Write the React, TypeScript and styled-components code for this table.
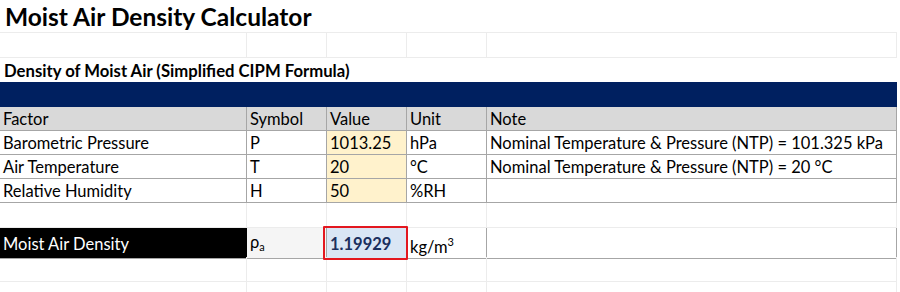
import React from 'react';
import styled, { createGlobalStyle } from 'styled-components';

const GlobalStyle = createGlobalStyle`
    html, body {
        margin: 0;
        padding: 0;
        background: #ffffff;
    }
    body {
        font-family: Lato, 'Open Sans', 'Liberation Sans', sans-serif;
        color: #000000;
    }
`;

const COLS = '247px 80px 80px 80px 410px';

const Sheet = styled.div`
    width: 900px;
    height: 292px;
    overflow: hidden;
    display: flex;
    flex-direction: column;
`;

const Row = styled.div<{ $h: number }>`
    display: grid;
    grid-template-columns: ${COLS};
    height: ${(p) => p.$h}px;
    flex-shrink: 0;
`;

const Cell = styled.div<{ $bg?: string; $line?: 'grid' | 'table' }>`
    display: flex;
    align-items: flex-end;
    padding: 0 3px 1px;
    font-size: 16.5px;
    line-height: 20px;
    white-space: nowrap;
    background: ${(p) => p.$bg ?? 'transparent'};
    border-right: 1px solid ${(p) => (p.$line === 'table' ? '#a6a6a6' : '#ececec')};
    border-bottom: 1px solid ${(p) => (p.$line === 'table' ? '#a6a6a6' : '#ececec')};
    box-sizing: border-box;
`;

const Title = styled.div`
    grid-column: 1 / span 5;
    display: flex;
    align-items: center;
    padding: 0 5px;
    font-size: 24.5px;
    font-weight: 700;
    border-bottom: 1px solid #ececec;
`;

const Subtitle = styled.div`
    grid-column: 1 / span 5;
    display: flex;
    align-items: flex-end;
    padding: 0 4px 1px;
    font-size: 16.7px;
    font-weight: 700;
`;

const NavyBar = styled.div`
    grid-column: 1 / span 5;
    background: #002060;
`;

const LabelCell = styled(Cell)`
    background: #000000;
    color: #ffffff;
    border-right-color: #000000;
    align-items: center;
    padding-top: 3px;
`;

const ResultCell = styled(Cell)`
    background: #dae6f5;
    color: #1b2f5e;
    font-weight: 700;
    align-items: center;
    padding-top: 2px;
    position: relative;
    &::after {
        content: '';
        position: absolute;
        left: -4px;
        top: -2px;
        right: -2px;
        bottom: -2px;
        border: 2px solid #e3171f;
        border-radius: 1px;
    }
`;

const Unit = styled(Cell)`
    align-items: flex-start;
    padding-top: 4px;
`;

const Sub = styled.sub`
    font-size: 11px;
    vertical-align: -3px;
`;

const Sup = styled.sup`
    font-size: 11px;
    vertical-align: 7px;
`;

const inputs = [
    { factor: 'Barometric Pressure', symbol: 'P', value: '1013.25', unit: 'hPa', note: 'Nominal Temperature & Pressure (NTP) = 101.325 kPa' },
    { factor: 'Air Temperature', symbol: 'T', value: '20', unit: '°C', note: 'Nominal Temperature & Pressure (NTP) = 20 °C' },
    { factor: 'Relative Humidity', symbol: 'H', value: '50', unit: '%RH', note: '' },
];

const EmptyRow = ({ h }: { h: number }) => (
    <Row $h={h}>
        <Cell />
        <Cell />
        <Cell />
        <Cell />
        <Cell />
    </Row>
);

export default function App() {
    return (
        <>
            <GlobalStyle />
            <Sheet>
                <Row $h={33}>
                    <Title>Moist Air Density Calculator</Title>
                </Row>
                <EmptyRow h={25} />
                <Row $h={24}>
                    <Subtitle>Density of Moist Air (Simplified CIPM Formula)</Subtitle>
                </Row>
                <Row $h={25}>
                    <NavyBar />
                </Row>
                <Row $h={24}>
                    <Cell $line="table" $bg="#d9d9d9">Factor</Cell>
                    <Cell $line="table" $bg="#d9d9d9">Symbol</Cell>
                    <Cell $line="table" $bg="#d9d9d9">Value</Cell>
                    <Cell $line="table" $bg="#d9d9d9">Unit</Cell>
                    <Cell $line="table" $bg="#d9d9d9">Note</Cell>
                </Row>
                {inputs.map((r) => (
                    <Row $h={24} key={r.factor}>
                        <Cell $line="table">{r.factor}</Cell>
                        <Cell $line="table">{r.symbol}</Cell>
                        <Cell $line="table" $bg="#fff2cc">{r.value}</Cell>
                        <Cell $line="table">{r.unit}</Cell>
                        <Cell $line="table">{r.note}</Cell>
                    </Row>
                ))}
                <EmptyRow h={25} />
                <Row $h={29}>
                    <LabelCell $line="table">Moist Air Density</LabelCell>
                    <Cell $line="table" $bg="#f5f5f5">
                        <span>
                            ρ<Sub>a</Sub>
                        </span>
                    </Cell>
                    <ResultCell $line="table">1.19929</ResultCell>
                    <Unit $line="table">
                        <span>
                            kg/m<Sup>3</Sup>
                        </span>
                    </Unit>
                    <Cell $line="table" />
                </Row>
                <EmptyRow h={25} />
                <EmptyRow h={25} />
            </Sheet>
        </>
    );
}
